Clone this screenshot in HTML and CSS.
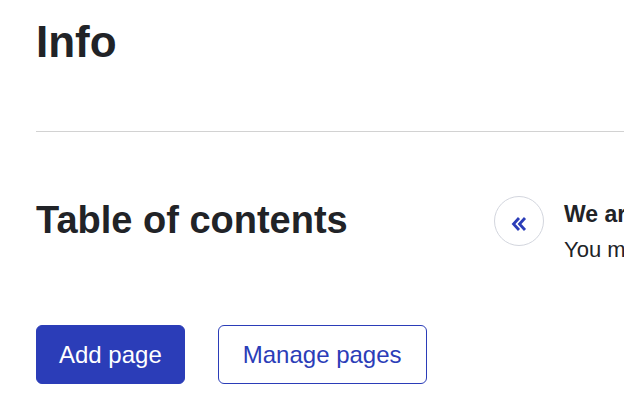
FILE: index.html
```html
<!DOCTYPE html>
<html lang="en">
<head>
<meta charset="utf-8">
<title>Info</title>
<link rel="stylesheet" href="styles.css">
</head>
<body>
<main class="page">
  <h1 class="title">Info</h1>
  <hr class="divider">
  <section class="toc-row">
    <h2 class="toc-title">Table of contents</h2>
    <div class="notice">
      <button class="collapse" aria-label="Collapse">
        <svg width="16" height="14" viewBox="0 0 16 14" aria-hidden="true">
          <path d="M8 1 L2.5 7 L8 13" fill="none" stroke="#2b3db8" stroke-width="2.8" stroke-linejoin="miter"/>
          <path d="M14 1 L8.5 7 L14 13" fill="none" stroke="#2b3db8" stroke-width="2.8" stroke-linejoin="miter"/>
        </svg>
      </button>
      <div class="notice-text">
        <p class="notice-head">We are changing how the table of contents works</p>
        <p class="notice-body">You may now add, remove and reorder pages from here.</p>
      </div>
    </div>
  </section>
  <div class="actions">
    <button class="btn btn-primary">Add page</button>
    <button class="btn btn-outline">Manage pages</button>
  </div>
</main>
</body>
</html>
```
FILE: styles.css
```css
html, body {
  margin: 0;
  padding: 0;
  background: #ffffff;
  overflow: hidden;
}
body {
  font-family: "Liberation Sans", Arial, sans-serif;
  color: #212327;
}
.page {
  padding: 20px 0 0 36px;
}
.title {
  margin: 0;
  font-size: 44px;
  line-height: 44px;
  font-weight: 700;
}
.divider {
  margin: 67px 0 0 0;
  border: 0;
  border-top: 1px solid #d2d2d2;
  height: 0;
}
.toc-row {
  display: flex;
  align-items: flex-start;
  margin-top: 64px;
  width: 900px;
}
.toc-title {
  margin: 5px 0 0 0;
  width: 458px;
  flex: none;
  font-size: 38px;
  line-height: 38px;
  font-weight: 700;
}
.notice {
  display: flex;
  gap: 20px;
  align-items: flex-start;
}
.collapse {
  width: 50px;
  height: 50px;
  flex: none;
  border-radius: 50%;
  border: 1px solid #d3d6de;
  background: #fff;
  padding: 5px 0 0 0;
  display: flex;
  align-items: center;
  justify-content: center;
}
.notice-text {
  white-space: nowrap;
  padding-top: 0;
}
.notice-text p {
  margin: 0;
  font-size: 22px;
  line-height: 36px;
}
.notice-text .notice-head {
  font-weight: 700;
  font-size: 23px;
}
.actions {
  display: flex;
  gap: 33px;
  margin-top: 57px;
}
.btn {
  font-family: "Liberation Sans", Arial, sans-serif;
  font-size: 24px;
  line-height: 57px;
  padding: 0 22px;
  border-radius: 6px;
  border: 1px solid #2b3db8;
  cursor: pointer;
}
.btn-primary {
  background: #2b3db8;
  color: #ffffff;
}
.btn-outline {
  background: #ffffff;
  color: #2b3db8;
  padding: 0 24px;
}
```
